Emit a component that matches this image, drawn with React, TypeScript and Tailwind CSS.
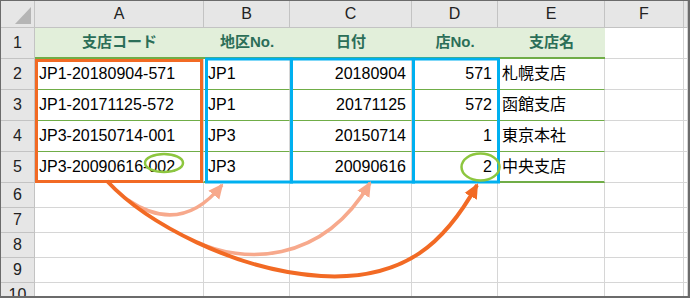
import React from "react";

const COLS = ["A", "B", "C", "D", "E", "F", ""];

const HEAD = ["支店コード", "地区No.", "日付", "店No.", "支店名"];

const DATA = [
  ["JP1-20180904-571", "JP1", "20180904", "571", "札幌支店"],
  ["JP1-20171125-572", "JP1", "20171125", "572", "函館支店"],
  ["JP3-20150714-001", "JP3", "20150714", "1", "東京本社"],
  ["JP3-20090616-002", "JP3", "20090616", "2", "中央支店"],
];

// right aligned columns (numbers)
const RIGHT = [false, false, true, true, false];

const hdr = "bg-[#e6e6e6] border-r border-b border-[#c3c3c3] flex items-center justify-center text-[#222]";
const cell = "border-r border-b border-[#d6d6d6]";

function Overlay() {
  return (
    <svg
      className="absolute inset-0 pointer-events-none"
      width="690"
      height="298"
      viewBox="0 0 690 298"
    >
      <defs>
        <marker id="headDark" markerUnits="userSpaceOnUse" markerWidth="16" markerHeight="16" refX="13" refY="8" orient="auto">
          <path d="M0,1 L15,8 L0,15 z" fill="#f26a24" />
        </marker>
        <marker id="headLight" markerUnits="userSpaceOnUse" markerWidth="16" markerHeight="16" refX="13" refY="8" orient="auto">
          <path d="M0,1 L15,8 L0,15 z" fill="#f7a98c" />
        </marker>
      </defs>

      {/* boxes */}
      <rect x="35.5" y="59.5" width="165" height="121" fill="none" stroke="#f26a24" strokeWidth="3" />
      <rect x="205.5" y="58" width="85" height="123" fill="none" stroke="#00b0f0" strokeWidth="3" />
      <rect x="290.5" y="58" width="122" height="123" fill="none" stroke="#00b0f0" strokeWidth="3" />
      <rect x="412.5" y="58" width="85" height="123" fill="none" stroke="#00b0f0" strokeWidth="3" />

      {/* circles */}
      <ellipse cx="163" cy="162" rx="19" ry="9" fill="none" stroke="#8dc63f" strokeWidth="2.5" />
      <ellipse cx="479.5" cy="166" rx="19" ry="13.5" fill="none" stroke="#8dc63f" strokeWidth="2.5" />

      {/* arrows */}
      <path d="M 127 199 Q 180 235 221 184" fill="none" stroke="#f7a98c" strokeWidth="3.5" markerEnd="url(#headLight)" />
      <path d="M 196 241 C 240 262 320 265 369 182" fill="none" stroke="#f7a98c" strokeWidth="3.5" markerEnd="url(#headLight)" />
      <path
        d="M 106 180 C 145 222 235 270 320 275 S 445 240 476 184"
        fill="none"
        stroke="#f26a24"
        strokeWidth="4"
        markerEnd="url(#headDark)"
      />
    </svg>
  );
}

export default function App() {
  const rowHeights = "grid-rows-[27px_31px_31px_31px_31px_31px_25px_25px_25px_25px_25px]";

  return (
    <div
      className="relative w-[690px] h-[298px] overflow-hidden bg-white border-l border-t border-r-2 border-b-2 border-[#6b6b6b]"
      style={{ fontFamily: '"Liberation Sans", "Noto Sans CJK JP", sans-serif' }}
    >
      <div className={`grid grid-cols-[34px_169px_86px_122px_86px_107px_79px_1fr] ${rowHeights}`}>
        {/* column header row */}
        <div className={`${hdr} relative`}>
          <div className="absolute right-[3px] bottom-[3px] w-0 h-0 border-l-[16px] border-l-transparent border-b-[17px] border-b-[#b5b5b5]" />
        </div>
        {COLS.map((c, i) => (
          <div key={i} className={`${hdr} text-[16px]`}>
            {c}
          </div>
        ))}

        {/* row 1 */}
        <div className={`${hdr} text-[16px]`}>1</div>
        {HEAD.map((h, i) => (
          <div
            key={i}
            className="bg-[#e2efda] border-b-2 border-b-[#70ad47] flex items-center justify-center text-[15px] font-bold text-[#2b6e58]"
          >
            {h}
          </div>
        ))}
        <div className={cell} />
        <div className={cell} />

        {/* data rows */}
        {DATA.map((row, r) => (
          <React.Fragment key={r}>
            <div className={`${hdr} text-[16px]`}>{r + 2}</div>
            {row.map((v, i) => (
              <div
                key={i}
                className={`border-r border-r-[#d6d6d6] ${
                  r === 3 ? "border-b-2" : "border-b"
                } border-b-[#70ad47] flex items-center text-[16px] text-black ${
                  RIGHT[i] ? "justify-end pr-[5px]" : "justify-start pl-[4px]"
                }`}
              >
                {v}
              </div>
            ))}
            <div className={cell} />
            <div className={cell} />
          </React.Fragment>
        ))}

        {/* empty rows */}
        {[6, 7, 8, 9, 10].map((n) => (
          <React.Fragment key={n}>
            <div className={`${hdr} text-[16px]`}>{n}</div>
            {[0, 1, 2, 3, 4, 5, 6].map((i) => (
              <div key={i} className={cell} />
            ))}
          </React.Fragment>
        ))}
      </div>

      <Overlay />
    </div>
  );
}
